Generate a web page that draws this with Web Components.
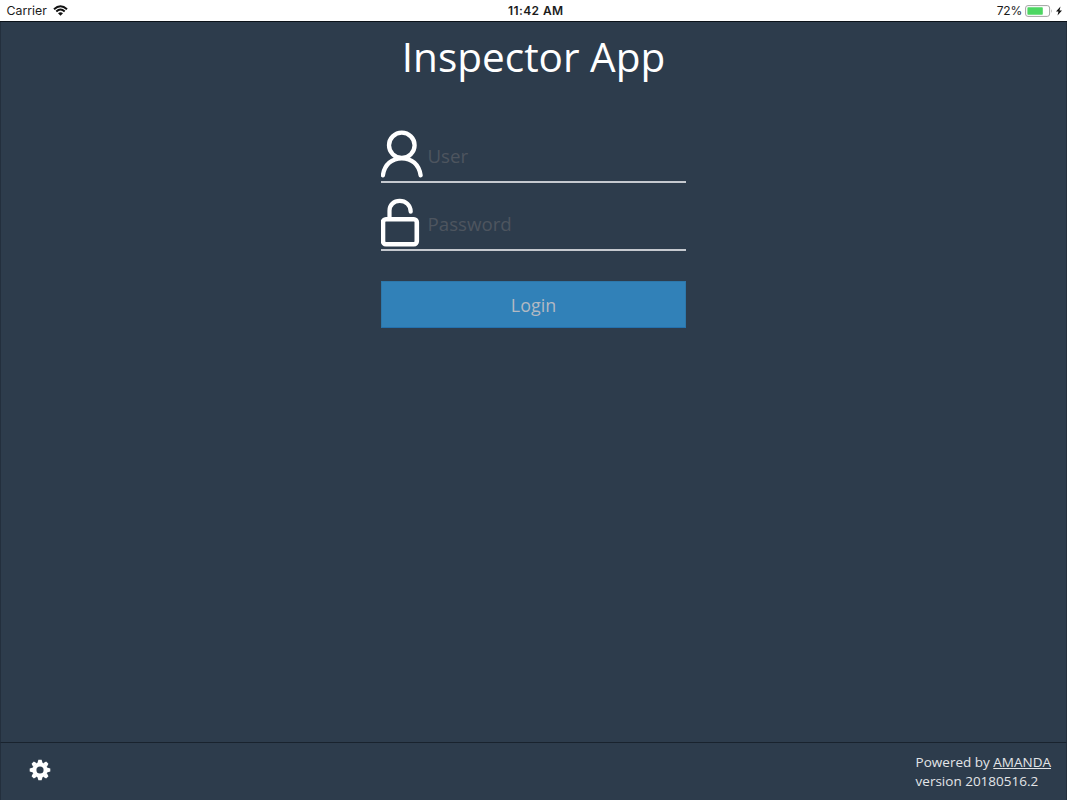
<!DOCTYPE html>
<html lang="en">
<head>
<meta charset="utf-8">
<title>Inspector App</title>
<style>
    body {
        margin: 0;
        font-family: "Open Sans", "Noto Sans", sans-serif;
    }
</style>
</head>
<body>
<inspector-app></inspector-app>

<script>
class StatusBar extends HTMLElement {
    constructor() {
        super();
        this.attachShadow({mode: 'open'});
    }

    connectedCallback() {
        this.shadowRoot.innerHTML = `
        <style>
        :host {
            display: grid;
            grid-template-columns: 1fr auto 1fr;
            align-items: center;
            box-sizing: border-box;
            height: 22px;
            padding: 0 5px 0 6.5px;
            background: #ffffff;
            border-bottom: 1px solid #0b1219;
            color: #1c1c1c;
            font-family: Inter, "Liberation Sans", sans-serif;
            font-size: 12.3px;
            line-height: 20px;
        }
        .left, .right {
            display: flex;
            align-items: center;
        }
        .left {
            gap: 6px;
        }
        .right {
            justify-content: flex-end;
            font-size: 12px;
            letter-spacing: -0.2px;
        }
        .time {
            font-size: 12px;
            font-weight: 600;
            letter-spacing: 0.4px;
            padding-left: 3px;
        }
        .battery { margin-left: 3px; }
        .bolt { margin-left: 3px; }
        svg { display: block; }
        </style>

        <div class="left">
            <span>Carrier</span>
            <svg width="15" height="11" viewBox="0 0 15 11" fill="none" stroke="#111111" stroke-width="2">
                <path d="M1 4.2Q7.5-1.8 14 4.2M3.3 6.5Q7.5 2.6 11.7 6.5"/>
                <path d="M7.5 10.7L5 8.2Q7.5 6.1 10 8.2Z" fill="#111111" stroke="none"/>
            </svg>
        </div>
        <div class="time">11:42 AM</div>
        <div class="right">
            <span>72%</span>
            <svg class="battery" width="28" height="12" viewBox="0 0 28 12">
                <rect x=".6" y=".6" width="24" height="10.8" rx="2.4" fill="#ffffff" stroke="#a3a3a3"/>
                <rect x="2.4" y="2.2" width="15.4" height="7.6" rx=".8" fill="#4cd662"/>
                <path d="M26 4Q27.6 6 26 8Z" fill="#a3a3a3"/>
            </svg>
            <svg class="bolt" width="6" height="10" viewBox="0 0 6 10">
                <path d="M4.5.6L0 5.5H2.5L1.5 9.4L6 4.4H3.5Z" fill="#111111"/>
            </svg>
        </div>
        `;
    }
}

class LoginField extends HTMLElement {
    constructor() {
        super();
        this.attachShadow({mode: 'open'});
    }

    connectedCallback() {
        this.shadowRoot.innerHTML = `
        <style>
        :host {
            display: flex;
            box-sizing: border-box;
            height: 53px;
            border-bottom: 2px solid #c5c9cf;
            color: #4d555f;
            font-size: 18.7px;
            line-height: 51px;
        }
        .icon {
            width: 46.5px;
            height: 51px;
        }
        .hint {
            flex: 1;
        }
        </style>

        <div class="icon"><slot name="icon"></slot></div>
        <div class="hint"><slot></slot></div>
        `;
    }
}

class LoginButton extends HTMLElement {
    constructor() {
        super();
        this.attachShadow({mode: 'open'});
    }

    connectedCallback() {
        this.shadowRoot.innerHTML = `
        <style>
        :host { display: block; }
        button {
            display: block;
            box-sizing: border-box;
            width: 100%;
            height: 47px;
            padding: 0;
            background: #3181b8;
            border: 1px solid #2d77aa;
            border-bottom-color: #2470ad;
            color: #b3b9c3;
            font-family: inherit;
            font-size: 17.9px;
        }
        </style>

        <button type="button"><slot></slot></button>
        `;
    }
}

class AppFooter extends HTMLElement {
    constructor() {
        super();
        this.attachShadow({mode: 'open'});
    }

    connectedCallback() {
        this.shadowRoot.innerHTML = `
        <style>
        :host {
            display: flex;
            justify-content: space-between;
            align-items: center;
            box-sizing: border-box;
            height: 58px;
            padding: 0 15px 0 28px;
            border-top: 1px solid #19232e;
            color: #e3e5e8;
            font-size: 13.5px;
            line-height: 19px;
        }
        svg {
            display: block;
            margin-top: -4px;
        }
        .about { padding-top: 1px; }
        a {
            color: inherit;
            text-underline-offset: 1px;
        }
        </style>

        <svg width="22" height="22" viewBox="-11 -11 22 22">
            <circle r="5.6" fill="none" stroke="#ffffff" stroke-width="4"/>
            <g fill="#ffffff">
                <path id="tooth" d="M-2.6-7L-1.6-10.3H1.6L2.6-7Z"/>
                <use href="#tooth" transform="rotate(45)"/>
                <use href="#tooth" transform="rotate(90)"/>
                <use href="#tooth" transform="rotate(135)"/>
                <use href="#tooth" transform="rotate(180)"/>
                <use href="#tooth" transform="rotate(225)"/>
                <use href="#tooth" transform="rotate(270)"/>
                <use href="#tooth" transform="rotate(315)"/>
            </g>
        </svg>
        <div class="about">
            <div>Powered by <a href="#">AMANDA</a></div>
            <div>version 20180516.2</div>
        </div>
        `;
    }
}

class InspectorApp extends HTMLElement {
    constructor() {
        super();
        this.attachShadow({mode: 'open'});
    }

    connectedCallback() {
        this.shadowRoot.innerHTML = `
        <style>
        :host {
            display: flex;
            flex-direction: column;
            box-sizing: border-box;
            height: 100vh;
            background: #2d3c4c;
        }
        main, app-footer {
            border-left: 1px solid #232f3d;
            border-right: 1px solid #232f3d;
        }
        main {
            flex: 1;
            display: flex;
            flex-direction: column;
            align-items: center;
            padding-top: 7px;
        }
        h1 {
            margin: 0;
            color: #ffffff;
            font-size: 40.5px;
            font-weight: 400;
            line-height: 56px;
        }
        form {
            display: flex;
            flex-direction: column;
            gap: 15px;
            width: 305px;
            margin-top: 45px;
        }
        login-button { margin-top: 15px; }
        svg { display: block; }
        </style>

        <status-bar></status-bar>
        <main>
            <h1>Inspector App</h1>
            <form>
                <login-field>
                    <svg slot="icon" width="43" height="50" viewBox="1 0.2 43 50" fill="none" stroke="#ffffff" stroke-width="4.3" stroke-linecap="round">
                        <ellipse cx="21.8" cy="15.5" rx="12.8" ry="12.6"/>
                        <path d="M2.9 45.5C4.5 34.5 12 28.6 21.8 28.6S39 34.5 40.6 45.5"/>
                    </svg>
                    User
                </login-field>
                <login-field>
                    <svg slot="icon" width="43" height="50" viewBox="0.5 0.5 43 50" fill="none" stroke="#ffffff" stroke-width="4.2" stroke-linecap="round">
                        <rect x="2.5" y="21.7" width="33.8" height="25" rx="2.9" stroke-width="4.6"/>
                        <path d="M9 21V13.2C9 7.4 13.4 3.4 19.2 3.4S30.2 7.6 30.2 14.2"/>
                    </svg>
                    Password
                </login-field>
                <login-button>Login</login-button>
            </form>
        </main>
        <app-footer></app-footer>
        `;
    }
}

customElements.define('status-bar', StatusBar);
customElements.define('login-field', LoginField);
customElements.define('login-button', LoginButton);
customElements.define('app-footer', AppFooter);
customElements.define('inspector-app', InspectorApp);
</script>
</body>
</html>
